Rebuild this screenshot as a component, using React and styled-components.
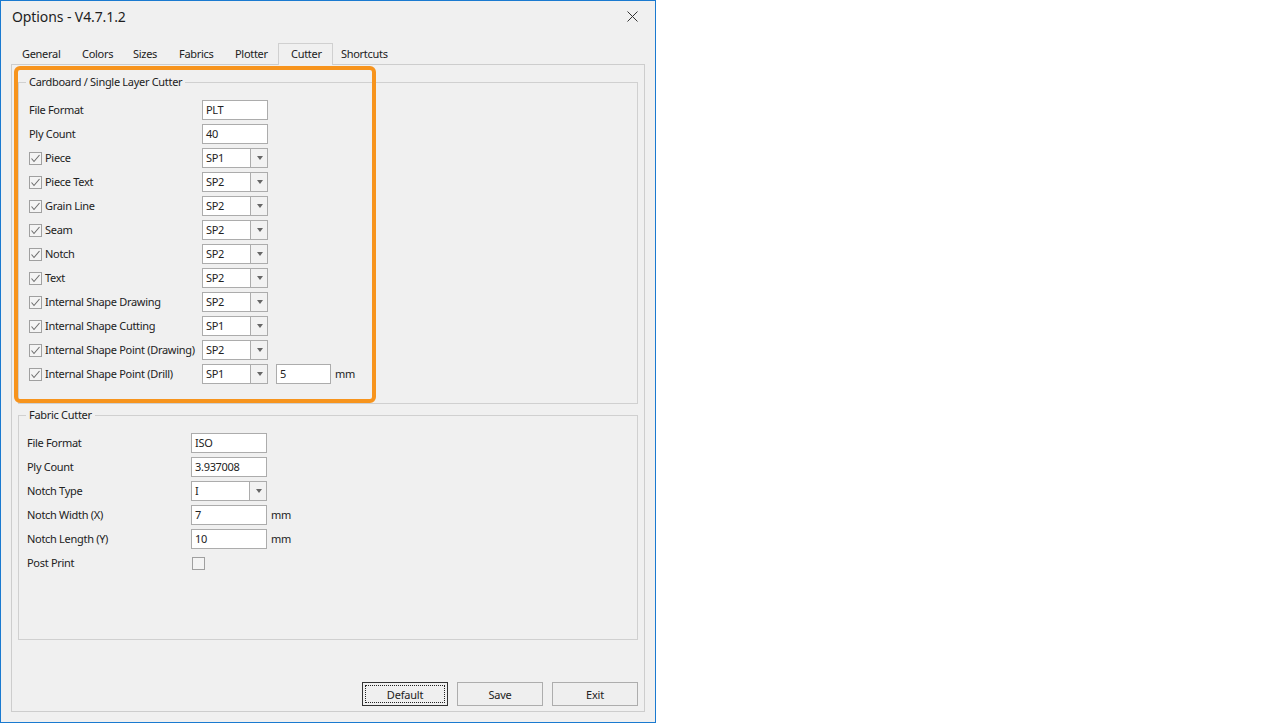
import React, { useState } from 'react';
import styled, { createGlobalStyle } from 'styled-components';

const GlobalStyle = createGlobalStyle`
    html, body {
        margin: 0;
        padding: 0;
        background: #ffffff;
    }
    body {
        font-family: "Noto Sans", "Liberation Sans", sans-serif;
        font-size: 11px;
        letter-spacing: -0.3px;
        color: #222;
    }
    * {
        box-sizing: border-box;
    }
`;

const tabs = [
    { label: 'General', width: 60 },
    { label: 'Colors', width: 51 },
    { label: 'Sizes', width: 46 },
    { label: 'Fabrics', width: 56 },
    { label: 'Plotter', width: 55 },
    { label: 'Cutter', width: 52 },
    { label: 'Shortcuts', width: 66 },
];

const layerRows = [
    { label: 'Piece', value: 'SP1' },
    { label: 'Piece Text', value: 'SP2' },
    { label: 'Grain Line', value: 'SP2' },
    { label: 'Seam', value: 'SP2' },
    { label: 'Notch', value: 'SP2' },
    { label: 'Text', value: 'SP2' },
    { label: 'Internal Shape Drawing', value: 'SP2' },
    { label: 'Internal Shape Cutting', value: 'SP1' },
    { label: 'Internal Shape Point (Drawing)', value: 'SP2' },
    { label: 'Internal Shape Point (Drill)', value: 'SP1', extra: '5' },
];

function CheckMark() {
    return (
        <svg width="11" height="11" viewBox="0 0 11 11">
            <polyline points="1.5,5.5 4,8.5 9.5,2" fill="none" stroke="#6e6e6e" strokeWidth="1.1" />
        </svg>
    );
}

function Check({ checked }) {
    return <CheckBox>{checked && <CheckMark />}</CheckBox>;
}

function Combo({ value, width }) {
    return (
        <ComboBox $width={width}>
            <ComboText>{value}</ComboText>
            <ComboButton>
                <Arrow />
            </ComboButton>
        </ComboBox>
    );
}

export default function App() {
    const [activeTab, setActiveTab] = useState('Cutter');

    return (
        <>
            <GlobalStyle />
            <Window>
                <TitleBar>
                    <Title>Options - V4.7.1.2</Title>
                    <CloseButton>
                        <svg width="11" height="11" viewBox="0 0 11 11">
                            <path d="M0.5 0.5 L10.5 10.5 M10.5 0.5 L0.5 10.5" stroke="#333" strokeWidth="1" />
                        </svg>
                    </CloseButton>
                </TitleBar>

                <TabStrip>
                    {tabs.map((tab) => (
                        <Tab
                            key={tab.label}
                            $width={tab.width}
                            $active={tab.label === activeTab}
                            onClick={() => setActiveTab(tab.label)}>
                            {tab.label}
                        </Tab>
                    ))}
                </TabStrip>

                <TabPanel>
                    <Group $pad={10}>
                        <Legend $pad={10}>Cardboard / Single Layer Cutter</Legend>
                        <Rows $labelWidth={173}>
                            <Label>File Format</Label>
                            <Controls><TextBox $width={66}>PLT</TextBox></Controls>
                            <Label>Ply Count</Label>
                            <Controls><TextBox $width={66}>40</TextBox></Controls>
                            {layerRows.map((row) => (
                                <React.Fragment key={row.label}>
                                    <CheckLabel>
                                        <Check checked />
                                        <Label>{row.label}</Label>
                                    </CheckLabel>
                                    <Controls>
                                        <Combo value={row.value} width={66} />
                                        {row.extra && (
                                            <>
                                                <TextBox $width={55} $gap={8}>{row.extra}</TextBox>
                                                <Unit>mm</Unit>
                                            </>
                                        )}
                                    </Controls>
                                </React.Fragment>
                            ))}
                        </Rows>
                    </Group>

                    <Group $pad={8} $top={3} $bottom={66}>
                        <Legend $pad={8}>Fabric Cutter</Legend>
                        <Rows $labelWidth={164}>
                            <Label>File Format</Label>
                            <Controls><TextBox $width={76}>ISO</TextBox></Controls>
                            <Label>Ply Count</Label>
                            <Controls><TextBox $width={76}>3.937008</TextBox></Controls>
                            <Label>Notch Type</Label>
                            <Controls><Combo value="I" width={76} /></Controls>
                            <Label>Notch Width (X)</Label>
                            <Controls><TextBox $width={76}>7</TextBox><Unit>mm</Unit></Controls>
                            <Label>Notch Length (Y)</Label>
                            <Controls><TextBox $width={76}>10</TextBox><Unit>mm</Unit></Controls>
                            <Label>Post Print</Label>
                            <Controls><PostCheck><Check /></PostCheck></Controls>
                        </Rows>
                    </Group>

                    <ButtonRow>
                        <Button $default><span>Default</span></Button>
                        <Button><span>Save</span></Button>
                        <Button><span>Exit</span></Button>
                    </ButtonRow>

                    <Highlight />
                </TabPanel>
            </Window>
        </>
    );
}

const Window = styled.div`
    width: 656px;
    height: 723px;
    border: 1px solid #1a7ad0;
    background: #f0f0f0;
    display: flex;
    flex-direction: column;
`;

const TitleBar = styled.div`
    height: 30px;
    display: flex;
    align-items: center;
    justify-content: space-between;
    padding: 0 17px 0 11px;
`;

const Title = styled.div`
    font-size: 14px;
    letter-spacing: -0.1px;
    color: #1e1e1e;
`;

const CloseButton = styled.div`
    display: flex;
    margin-top: 1px;
`;

const TabStrip = styled.div`
    display: flex;
    align-items: flex-end;
    height: 21px;
    margin: 12px 10px 0 12px;
`;

const Tab = styled.div`
    width: ${(p) => p.$width + (p.$active ? 3 : 0)}px;
    height: ${(p) => (p.$active ? 22 : 19)}px;
    line-height: ${(p) => (p.$active ? 19 : 17)}px;
    padding-left: ${(p) => (p.$active ? 12 : 9)}px;
    margin: ${(p) => (p.$active ? '0 -1px -1px -3px' : '0')};
    border: ${(p) => (p.$active ? '1px solid #d0d0d0' : 'none')};
    border-bottom: none;
    background: #f0f0f0;
    position: relative;
    z-index: ${(p) => (p.$active ? 1 : 0)};
    white-space: nowrap;
    cursor: default;
`;

const TabPanel = styled.div`
    position: relative;
    flex: 1;
    margin: 0 10px 10px 10px;
    border: 1px solid #cdcdcd;
    padding: 9px 6px 5px 6px;
    display: flex;
    flex-direction: column;
`;

const Group = styled.fieldset`
    margin: ${(p) => p.$top || 0}px 0 0 0;
    min-inline-size: 0;
    border: 1px solid #d0d0d0;
    padding: 10px 0 ${(p) => p.$bottom || 19}px ${(p) => p.$pad}px;
`;

const Legend = styled.legend`
    padding: 0 3px;
    margin-left: ${(p) => 7 - p.$pad}px;
    line-height: 16px;
    color: #222;
`;

const Rows = styled.div`
    display: grid;
    grid-template-columns: ${(p) => p.$labelWidth}px auto;
    grid-auto-rows: 20px;
    row-gap: 4px;
    align-items: center;
`;

const Label = styled.div`
    white-space: nowrap;
    line-height: 16px;
    margin-top: -1px;
`;

const CheckLabel = styled.div`
    display: flex;
    align-items: center;
    gap: 3px;
`;

const CheckBox = styled.div`
    width: 13px;
    height: 13px;
    border: 1px solid #a0a0a0;
    background: #f4f4f4;
    display: flex;
    align-items: center;
    justify-content: center;
`;

const PostCheck = styled.div`
    margin-left: 1px;
    display: flex;
`;

const Controls = styled.div`
    display: flex;
    align-items: center;
    height: 20px;
`;

const TextBox = styled.div`
    width: ${(p) => p.$width}px;
    height: 20px;
    margin-left: ${(p) => p.$gap || 0}px;
    border: 1px solid #acacac;
    background: #ffffff;
    padding-left: 3px;
    line-height: 17px;
`;

const ComboBox = styled.div`
    width: ${(p) => p.$width}px;
    height: 20px;
    border: 1px solid #acacac;
    background: #ffffff;
    display: flex;
`;

const ComboText = styled.div`
    flex: 1;
    padding-left: 3px;
    line-height: 17px;
    border-right: 1px solid #acacac;
`;

const ComboButton = styled.div`
    width: 16px;
    display: flex;
    align-items: center;
    justify-content: center;
    background: #f2f2f2;
`;

const Arrow = styled.div`
    width: 0;
    height: 0;
    border-left: 3.5px solid transparent;
    border-right: 3.5px solid transparent;
    border-top: 4px solid #666;
    margin-left: 1px;
`;

const Unit = styled.span`
    margin-left: 4px;
    margin-top: -1px;
`;

const Highlight = styled.div`
    position: absolute;
    left: 2px;
    top: 1px;
    width: 362px;
    height: 337px;
    border: 4px solid #f7941d;
    border-radius: 6px;
    pointer-events: none;
`;

const ButtonRow = styled.div`
    margin-top: auto;
    display: flex;
    justify-content: flex-end;
    gap: 9px;
`;

const Button = styled.button`
    width: 86px;
    height: 24px;
    padding: 2px;
    border: 1px solid ${(p) => (p.$default ? '#333' : '#adadad')};
    background: #efefef;
    font-family: "Noto Sans", "Liberation Sans", sans-serif;
    font-size: 11px;
    letter-spacing: -0.2px;
    color: #222;

    span {
        display: flex;
        align-items: center;
        justify-content: center;
        height: 100%;
        border: 1px dotted ${(p) => (p.$default ? '#222' : 'transparent')};
    }
`;
